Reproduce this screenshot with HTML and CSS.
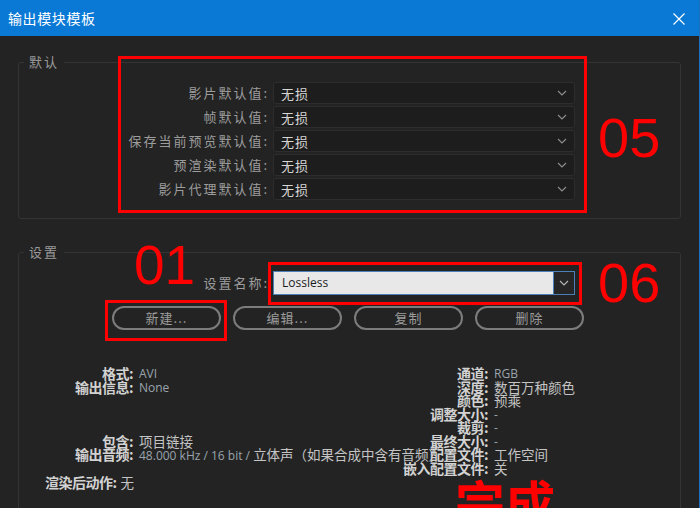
FILE: index.html
```html
<!DOCTYPE html>
<html lang="zh-CN">
<head>
<meta charset="utf-8">
<title>输出模块模板</title>
<link rel="stylesheet" href="styles.css">
</head>
<body>
<div class="window">
  <div class="titlebar">
    <span class="title">输出模块模板</span>
    <svg class="close" width="12" height="12" viewBox="0 0 12 12"><path d="M0.5 0.5L11.5 11.5M11.5 0.5L0.5 11.5" stroke="#ffffff" stroke-width="1.2" fill="none"/></svg>
  </div>
  <div class="content">
    <fieldset class="group group-defaults">
      <legend>默认</legend>
      <div class="form-row"><span class="lbl">影片默认值:</span><div class="select"><span>无损</span><svg class="chev" width="10" height="6" viewBox="0 0 10 6"><path d="M1 1L5 5L9 1" stroke="#8c8c8c" stroke-width="1.2" fill="none"/></svg></div></div>
      <div class="form-row"><span class="lbl">帧默认值:</span><div class="select"><span>无损</span><svg class="chev" width="10" height="6" viewBox="0 0 10 6"><path d="M1 1L5 5L9 1" stroke="#8c8c8c" stroke-width="1.2" fill="none"/></svg></div></div>
      <div class="form-row"><span class="lbl">保存当前预览默认值:</span><div class="select"><span>无损</span><svg class="chev" width="10" height="6" viewBox="0 0 10 6"><path d="M1 1L5 5L9 1" stroke="#8c8c8c" stroke-width="1.2" fill="none"/></svg></div></div>
      <div class="form-row"><span class="lbl">预渲染默认值:</span><div class="select"><span>无损</span><svg class="chev" width="10" height="6" viewBox="0 0 10 6"><path d="M1 1L5 5L9 1" stroke="#8c8c8c" stroke-width="1.2" fill="none"/></svg></div></div>
      <div class="form-row"><span class="lbl">影片代理默认值:</span><div class="select"><span>无损</span><svg class="chev" width="10" height="6" viewBox="0 0 10 6"><path d="M1 1L5 5L9 1" stroke="#8c8c8c" stroke-width="1.2" fill="none"/></svg></div></div>
    </fieldset>

    <fieldset class="group group-settings">
      <legend>设置</legend>
      <div class="form-row name-row"><span class="lbl">设置名称:</span><div class="combo"><span class="combo-text">Lossless</span><span class="combo-btn"><svg width="10" height="6" viewBox="0 0 10 6"><path d="M1 1L5 5L9 1" stroke="#b4b4b4" stroke-width="1.2" fill="none"/></svg></span></div></div>
      <div class="buttons">
        <button class="btn">新建...</button>
        <button class="btn">编辑...</button>
        <button class="btn">复制</button>
        <button class="btn">删除</button>
      </div>
      <div class="info">
        <div class="info-col info-left">
          <div class="info-row"><span class="k">格式:</span><span class="v lat">AVI</span></div>
          <div class="info-row"><span class="k">输出信息:</span><span class="v lat">None</span></div>
          <div class="info-row"></div>
          <div class="info-row"></div>
          <div class="info-row"></div>
          <div class="info-row"><span class="k">包含:</span><span class="v">项目链接</span></div>
          <div class="info-row"><span class="k">输出音频:</span><span class="v"><span class="lat">48.000 kHz / 16 bit / </span>立体声（如果合成中含有音频）</span></div>
        </div>
        <div class="info-col info-right">
          <div class="info-row"><span class="k">通道:</span><span class="v lat">RGB</span></div>
          <div class="info-row"><span class="k">深度:</span><span class="v">数百万种颜色</span></div>
          <div class="info-row"><span class="k">颜色:</span><span class="v">预乘</span></div>
          <div class="info-row"><span class="k">调整大小:</span><span class="v lat">-</span></div>
          <div class="info-row"><span class="k">裁剪:</span><span class="v lat">-</span></div>
          <div class="info-row"><span class="k">最终大小:</span><span class="v lat">-</span></div>
          <div class="info-row"><span class="k">配置文件:</span><span class="v">工作空间</span></div>
          <div class="info-row"><span class="k">嵌入配置文件:</span><span class="v">关</span></div>
        </div>
      </div>
      <div class="post-row"><span class="k">渲染后动作:</span><span class="v">无</span></div>
    </fieldset>
  </div>

  <div class="mark box05"></div>
  <div class="mark box06"></div>
  <div class="mark box01"></div>
  <div class="num num05">05</div>
  <div class="num num06">06</div>
  <div class="num num01">01</div>
  <div class="done">完成</div>
</div>
</body>
</html>
```

FILE: styles.css
```css
* { box-sizing: border-box; }
html, body { margin: 0; padding: 0; background: #ffffff; }
body { font-family: "Noto Sans CJK SC", "Noto Sans", sans-serif; }

.window {
  position: relative;
  width: 700px;
  height: 508px;
  background: #232323;
  border-right: 1px solid #1f6fbf;
  overflow: hidden;
}

.titlebar {
  height: 36px;
  background: #0a79d6;
  display: flex;
  align-items: center;
  justify-content: space-between;
  padding-left: 8px;
  padding-right: 14px;
}
.title {
  color: #ffffff;
  font-size: 14px;
  letter-spacing: 0.6px;
  line-height: 20px;
}
.close { display: block; margin-top: 1px; }

.content {
  padding: 18px 18px 0 18px;
}

.group {
  margin: 0;
  padding: 0;
  border: 1px solid #343434;
  border-radius: 3px;
  min-inline-size: 0;
}
.group legend {
  margin-left: 5px;
  padding: 0 5px;
  font-size: 13px;
  line-height: 16px;
  letter-spacing: 2px;
  color: #9a9a9a;
}

.group-defaults {
  padding: 12px 0 18px 0;
  display: flex;
  flex-direction: column;
  gap: 2px;
}

.form-row {
  display: flex;
  align-items: center;
  gap: 4px;
  height: 22px;
}
.lbl {
  width: 250px;
  text-align: right;
  font-size: 13px;
  letter-spacing: 2px;
  color: #9c9c9c;
  white-space: nowrap;
  line-height: 16px;
}
.select {
  width: 302px;
  height: 22px;
  background: #1d1d1d;
  border: 1px solid #2d2d2d;
  border-radius: 3px;
  display: flex;
  align-items: center;
  justify-content: space-between;
  padding: 0 7px 0 7px;
  color: #d6d6d6;
  font-size: 13px;
  letter-spacing: 1px;
}
.chev { display: block; }

.group-settings {
  margin-top: 25px;
  padding: 11px 0 80px 0;
}
.name-row { height: 24px; }
.combo {
  width: 302px;
  height: 24px;
  display: flex;
  border: 1px solid #4a80b8;
  background: #e8e8e8;
}
.combo-text {
  flex: 1;
  padding-left: 8px;
  font-family: "Open Sans", "Noto Sans", sans-serif;
  font-size: 12px;
  line-height: 22px;
  color: #1c1c1c;
}
.combo-btn {
  width: 21px;
  background: #262626;
  border-left: 1px solid #4a80b8;
  display: flex;
  align-items: center;
  justify-content: center;
}

.buttons {
  display: flex;
  gap: 12px;
  margin-top: 11px;
  padding-left: 93px;
}
.btn {
  width: 109px;
  height: 24px;
  border: 2px solid #7c7c7c;
  border-radius: 12px;
  background: transparent;
  color: #9c9c9c;
  font-family: "Noto Sans CJK SC", sans-serif;
  font-size: 13px;
  letter-spacing: 1px;
  line-height: 18px;
  padding: 0;
}

.info {
  display: flex;
  margin-top: 37px;
}
.info-col {
  display: grid;
  grid-auto-rows: 13.5px;
}
.info-left { width: 341px; }
.info-left .k { width: 114px; }
.info-right .k { width: 128px; }
.info-row {
  display: flex;
  align-items: center;
  white-space: nowrap;
  height: 13.5px;
}
.k {
  text-align: right;
  font-weight: bold;
  font-size: 14px;
  line-height: 13.5px;
  color: #d2d2d2;
  letter-spacing: -0.5px;
}
.v {
  margin-left: 6px;
  font-size: 13.5px;
  line-height: 13.5px;
  color: #c4c4c4;
}
.lat {
  font-family: "Open Sans", "Noto Sans", sans-serif;
  font-size: 12px;
  color: #9aa3ad;
}
.v .lat { margin-left: 0; }

.post-row {
  display: flex;
  align-items: center;
  height: 14px;
  margin-top: 1px;
  padding-left: 26px;
  white-space: nowrap;
}
.post-row .v { margin-left: 4px; }

.mark {
  position: absolute;
  border: 3px solid #ff0000;
}
.box05 { left: 118px; top: 56px; width: 469px; height: 157px; }
.box06 { left: 268px; top: 262px; width: 314px; height: 43px; }
.box01 { left: 105px; top: 300px; width: 122px; height: 41px; }

.num {
  position: absolute;
  font-family: "Liberation Sans", Arial, sans-serif;
  color: #ff0000;
  line-height: 1;
}
.num05 { left: 598px; top: 110px; font-size: 56px; }
.num06 { left: 598px; top: 255px; font-size: 56px; }
.num01 { left: 134px; top: 238px; font-size: 55px; }

.done {
  position: absolute;
  left: 455px;
  top: 476px;
  font-size: 50px;
  line-height: 1;
  font-weight: bold;
  color: #ff0000;
}
```
